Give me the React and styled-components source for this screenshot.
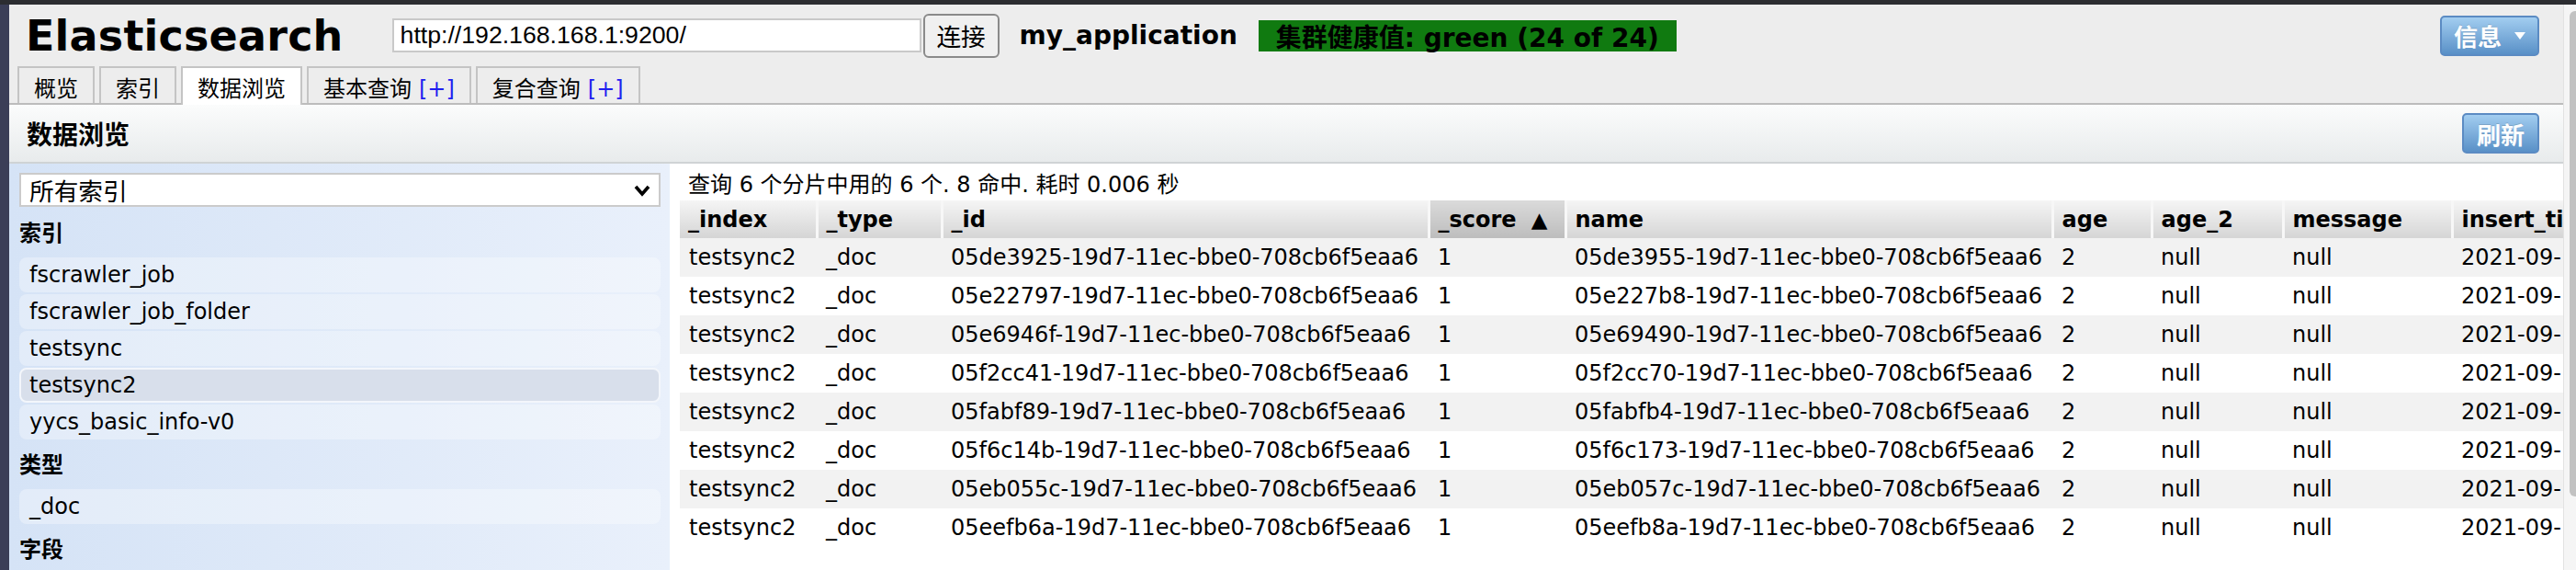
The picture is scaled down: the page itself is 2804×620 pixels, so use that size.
import React from 'react';
import styled, {createGlobalStyle} from 'styled-components';

const GlobalStyle = createGlobalStyle`
  html, body {
    margin: 0;
    padding: 0;
    background: #fff;
  }
  body {
    font-family: "DejaVu Sans", "Noto Sans CJK SC", sans-serif;
    font-size: 24px;
    color: #000;
    overflow: hidden;
  }
  * {
    box-sizing: border-box;
  }
`;

const Screen = styled.div`
  width: 2804px;
  height: 620px;
  display: flex;
  flex-direction: column;
  overflow: hidden;
`;

const TopBar = styled.div`
  flex: none;
  height: 5px;
  background: #2c2d31;
`;

const Frame = styled.div`
  flex: 1;
  display: flex;
  min-height: 0;
`;

const DesktopEdge = styled.div`
  flex: none;
  width: 10px;
  background: #3b3e57;
`;

const Page = styled.div`
  flex: 1;
  min-width: 0;
  display: flex;
  flex-direction: column;
  overflow: hidden;
`;

const Scrollbar = styled.div`
  flex: none;
  width: 14px;
  padding: 7px 0 0 6px;
  background: #f5f5f5;
  border-left: 1px solid #e2e2e2;
`;

const Thumb = styled.div`
  height: 528px;
  background: #c2c2c2;
  border-radius: 6px 0 0 6px;
`;

/* ---------- header ---------- */

const Header = styled.header`
  background: #ededed;
  border-bottom: 2px solid #bcbcbc;
`;

const TitleRow = styled.div`
  height: 67px;
  display: flex;
  align-items: center;
  padding: 0 26px 0 18px;
`;

const Logo = styled.h1`
  margin: 0 53px 0 0;
  font: bold 46px/1 "DejaVu Sans", sans-serif;
  letter-spacing: 0.2px;
`;

const UrlInput = styled.div`
  width: 576px;
  height: 37px;
  padding: 0 7px;
  display: flex;
  align-items: center;
  background: #fff;
  border: 2px solid #c9c9c9;
  font: 26.67px "Liberation Sans", sans-serif;
`;

const PlainButton = styled.div`
  margin-left: 2px;
  width: 83px;
  height: 48px;
  display: flex;
  align-items: center;
  justify-content: center;
  background: #f0f0f0;
  border: 2px solid #8a8a8a;
  border-radius: 6px;
  font: 26.67px "Liberation Sans", "Noto Sans CJK SC", sans-serif;
`;

const ClusterName = styled.span`
  margin-left: 22px;
  font-weight: bold;
  font-size: 28px;
`;

const Health = styled.span`
  margin-left: 23px;
  height: 34px;
  padding: 0 19px;
  display: flex;
  align-items: center;
  background: #107a10;
  font-weight: bold;
  font-size: 28px;
  color: #000;
`;

const Spacer = styled.div`
  flex: 1;
`;

const BlueButton = styled.div`
  height: 44px;
  padding: 0 ${(p) => p.$pad || 15}px;
  display: flex;
  align-items: center;
  gap: 14px;
  color: #fff;
  font-weight: bold;
  font-size: 26px;
  background: linear-gradient(#a2cdf0, #5990c7);
  border: 2px solid #5b8bc3;
  border-radius: 5px;
  text-shadow: 0 -1px 0 rgba(0, 0, 0, 0.15);
`;

const TabBar = styled.div`
  display: flex;
  gap: 5px;
  padding-left: 9px;
  height: 40px;
`;

const Tab = styled.div`
  height: ${(p) => (p.$active ? 42 : 40)}px;
  padding: 9px 16px 0;
  line-height: 29px;
  white-space: nowrap;
  background: ${(p) => (p.$active ? '#fff' : '#ededed')};
  border: 2px solid #c4c4c4;
  border-bottom: none;
`;

const Plus = styled.span`
  margin-left: 8px;
  color: #1f1ff0;
`;

/* ---------- toolbar ---------- */

const Toolbar = styled.div`
  height: 64px;
  padding: 0 26px 0 19px;
  display: flex;
  align-items: center;
  justify-content: space-between;
  background: linear-gradient(#fbfcfc, #e8ebec);
  border-bottom: 2px solid #cfd3d5;
`;

const ToolbarTitle = styled.h2`
  margin: 0;
  font-size: 28px;
  font-weight: bold;
`;

/* ---------- body ---------- */

const Body = styled.div`
  flex: 1;
  min-height: 0;
  display: flex;
`;

const Sidebar = styled.aside`
  flex: none;
  width: 719px;
  padding: 10px 10px 0 11px;
  background: linear-gradient(to right, #d5e3f6, #e9f0fb);
`;

const SelectBox = styled.div`
  height: 37px;
  padding: 0 9px 0 9px;
  display: flex;
  align-items: center;
  justify-content: space-between;
  background: #fff;
  border: 2px solid #cbcbcb;
  font: 26.67px "Liberation Sans", "Noto Sans CJK SC", sans-serif;
`;

const SectionTitle = styled.div`
  padding: ${(p) => (p.$first ? 11 : 10)}px 0 8px;
  line-height: 36px;
  font-weight: bold;
`;

const FilterList = styled.div`
  display: flex;
  flex-direction: column;
  gap: 2px;
`;

const FilterItem = styled.div`
  height: 38px;
  padding-left: 9px;
  display: flex;
  align-items: center;
  border-radius: 8px;
  background: ${(p) => (p.$selected ? '#d8dfeb' : 'rgba(255, 255, 255, 0.32)')};
  border: 2px solid ${(p) => (p.$selected ? '#f3f6fb' : 'transparent')};
`;

const Main = styled.main`
  flex: 1;
  min-width: 0;
  overflow: hidden;
  padding: 6px 0 0 11px;
  background: #fff;
`;

const Summary = styled.div`
  padding-left: 9px;
  line-height: 34px;
  white-space: nowrap;
`;

const Results = styled.table`
  table-layout: fixed;
  width: 2229px;
  border-collapse: collapse;
`;

const HeadCell = styled.th`
  height: 41px;
  padding: 0 0 0 9px;
  text-align: left;
  font-weight: bold;
  white-space: nowrap;
  overflow: hidden;
  background: ${(p) =>
    p.$sorted
      ? 'linear-gradient(#dadada, #bdbdbd)'
      : 'linear-gradient(#f5f5f5, #d5d5d5)'};
  border-left: ${(p) => (p.$first ? 'none' : '3px solid #f7f7f7')};
`;

const SortMark = styled.span`
  margin-left: 16px;
  font-size: 23px;
`;

const Row = styled.tr`
  background: ${(p) => (p.$odd ? '#f2f2f2' : '#fff')};
`;

const Cell = styled.td`
  height: 42px;
  padding: 0 0 0 10px;
  white-space: nowrap;
  overflow: hidden;
`;

const Chevron = () => (
  <svg width="18" height="14" viewBox="0 0 18 14">
    <polyline points="2,3 9,11 16,3" fill="none" stroke="#000" strokeWidth="3.6" />
  </svg>
);

const Caret = () => (
  <svg width="12" height="8" viewBox="0 0 12 8">
    <polygon points="0,0 12,0 6,8" fill="#fff" />
  </svg>
);

const columns = [
  {key: '_index', width: 149},
  {key: '_type', width: 136},
  {key: '_id', width: 530},
  {key: '_score', width: 149, sorted: true},
  {key: 'name', width: 530},
  {key: 'age', width: 108},
  {key: 'age_2', width: 143},
  {key: 'message', width: 184},
  {key: 'insert_time', width: 300},
];

const suffix = '-19d7-11ec-bbe0-708cb6f5eaa6';

const docs = [
  ['05de3925', '05de3955', '2021-09-17 10:21:05'],
  ['05e22797', '05e227b8', '2021-09-17 10:21:05'],
  ['05e6946f', '05e69490', '2021-09-17 10:21:05'],
  ['05f2cc41', '05f2cc70', '2021-09-17 10:21:05'],
  ['05fabf89', '05fabfb4', '2021-09-17 10:21:05'],
  ['05f6c14b', '05f6c173', '2021-09-17 10:21:05'],
  ['05eb055c', '05eb057c', '2021-09-17 10:21:05'],
  ['05eefb6a', '05eefb8a', '2021-09-17 10:21:05'],
];

const indices = ['fscrawler_job', 'fscrawler_job_folder', 'testsync', 'testsync2', 'yycs_basic_info-v0'];

const App = () => {
  return (
    <Screen>
      <GlobalStyle />
      <TopBar />
      <Frame>
        <DesktopEdge />
        <Page>
          <Header>
            <TitleRow>
              <Logo>Elasticsearch</Logo>
              <UrlInput>http://192.168.168.1:9200/</UrlInput>
              <PlainButton>连接</PlainButton>
              <ClusterName>my_application</ClusterName>
              <Health>集群健康值: green (24 of 24)</Health>
              <Spacer />
              <BlueButton $pad={13}>
                信息
                <Caret />
              </BlueButton>
            </TitleRow>
            <TabBar>
              <Tab>概览</Tab>
              <Tab>索引</Tab>
              <Tab $active>数据浏览</Tab>
              <Tab>
                基本查询<Plus>[+]</Plus>
              </Tab>
              <Tab>
                复合查询<Plus>[+]</Plus>
              </Tab>
            </TabBar>
          </Header>

          <Toolbar>
            <ToolbarTitle>数据浏览</ToolbarTitle>
            <BlueButton $pad={14}>刷新</BlueButton>
          </Toolbar>

          <Body>
            <Sidebar>
              <SelectBox>
                所有索引
                <Chevron />
              </SelectBox>
              <SectionTitle $first>索引</SectionTitle>
              <FilterList>
                {indices.map((name) => (
                  <FilterItem key={name} $selected={name === 'testsync2'}>
                    {name}
                  </FilterItem>
                ))}
              </FilterList>
              <SectionTitle>类型</SectionTitle>
              <FilterList>
                <FilterItem>_doc</FilterItem>
              </FilterList>
              <SectionTitle>字段</SectionTitle>
            </Sidebar>

            <Main>
              <Summary>查询 6 个分片中用的 6 个. 8 命中. 耗时 0.006 秒</Summary>
              <Results>
                <colgroup>
                  {columns.map((c) => (
                    <col key={c.key} style={{width: c.width}} />
                  ))}
                </colgroup>
                <thead>
                  <tr>
                    {columns.map((c, i) => (
                      <HeadCell key={c.key} $first={i === 0} $sorted={c.sorted}>
                        {c.key}
                        {c.sorted && <SortMark>▲</SortMark>}
                      </HeadCell>
                    ))}
                  </tr>
                </thead>
                <tbody>
                  {docs.map(([id, name, time], i) => (
                    <Row key={id} $odd={i % 2 === 0}>
                      <Cell>testsync2</Cell>
                      <Cell>_doc</Cell>
                      <Cell>{id + suffix}</Cell>
                      <Cell>1</Cell>
                      <Cell>{name + suffix}</Cell>
                      <Cell>2</Cell>
                      <Cell>null</Cell>
                      <Cell>null</Cell>
                      <Cell>{time}</Cell>
                    </Row>
                  ))}
                </tbody>
              </Results>
            </Main>
          </Body>
        </Page>
        <Scrollbar>
          <Thumb />
        </Scrollbar>
      </Frame>
    </Screen>
  );
};

export default App;
